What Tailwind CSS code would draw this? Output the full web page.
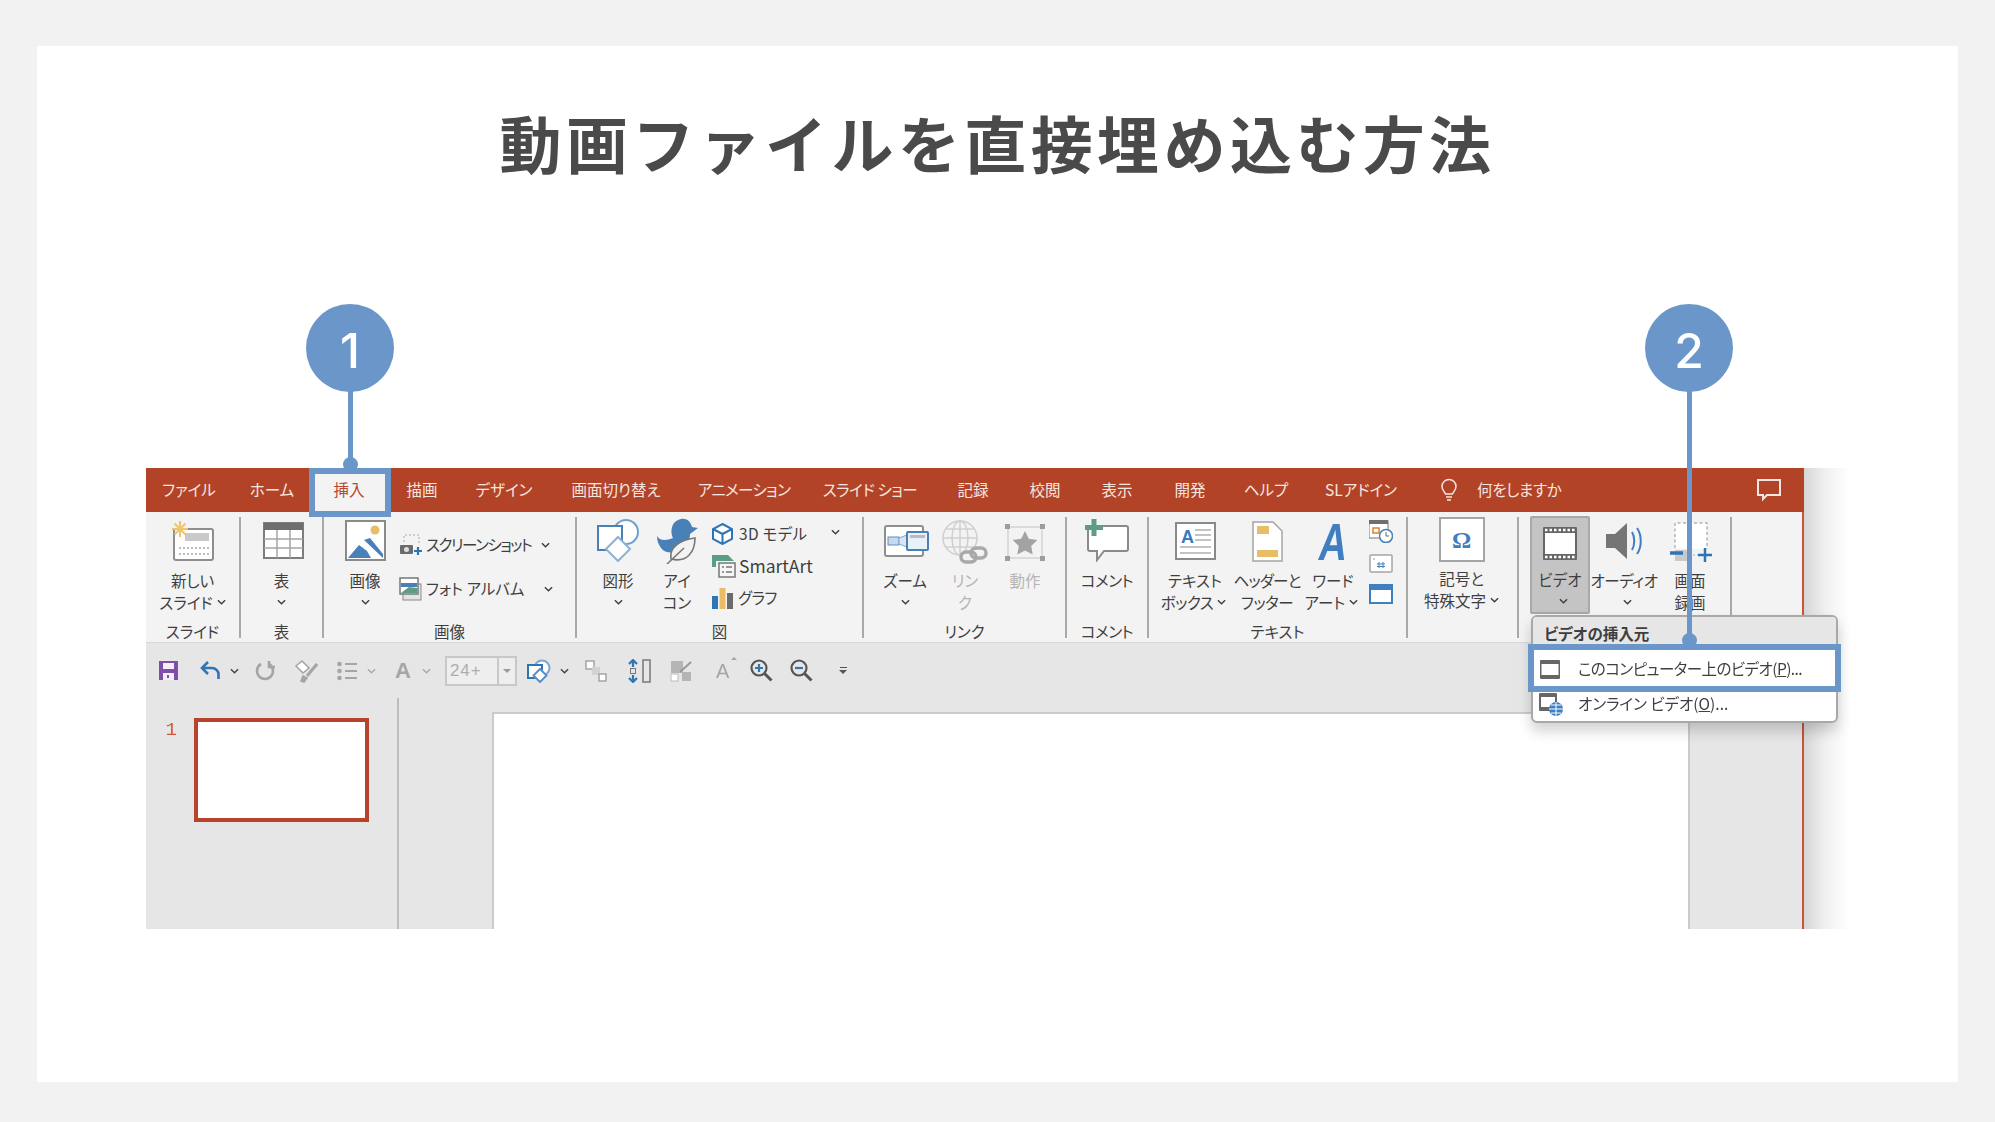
<!DOCTYPE html>
<html lang="ja">
<head>
<meta charset="UTF-8" />
<title>動画ファイルを直接埋め込む方法</title>
<script src="https://cdn.jsdelivr.net/npm/@tailwindcss/browser@4"></script>
</head>
<body class="bg-[#f2f2f2] font-['Noto_Sans_CJK_JP',sans-serif] overflow-hidden">
<svg class="hidden"><defs>
  <symbol id="chev" viewBox="0 0 10 6"><path d="M1 1l4 4 4-4" fill="none" stroke="currentColor" stroke-width="1.6"/></symbol>
</defs></svg>

<div class="relative w-[1995px] h-[1122px] pt-[46px] pl-[37px]">
  <!-- カード -->
  <div class="w-[1921px] h-[1036px] bg-white">
    <h1 class="pt-[60px] h-[422px] text-center text-[62px] leading-[72px] font-bold tracking-[4.4px] text-[#4a4a4a]">動画ファイルを直接埋め込む方法</h1>

    <div class="flex ml-[109px] blur-[0.4px]">
      <!-- PowerPoint -->
      <div class="w-[1658px] h-[461px] flex flex-col text-[#3f3f3f] text-[15.5px] [font-feature-settings:'palt']">
        <!-- タブ -->
        <div class="h-[44px] bg-[#b24326] flex items-center text-[#f6e6e0] text-center">
          <div class="w-[86px]">ファイル</div>
          <div class="w-[80px]">ホーム</div>
          <div class="w-[74px] h-full flex items-center justify-center bg-[#f3f3f3] text-[#b7472a]">挿入</div>
          <div class="w-[72px]">描画</div>
          <div class="w-[92px]">デザイン</div>
          <div class="w-[132px]">画面切り替え</div>
          <div class="w-[124px] tracking-[-0.6px]">アニメーション</div>
          <div class="w-[128px] tracking-[-0.4px]">スライド ショー</div>
          <div class="w-[78px]">記録</div>
          <div class="w-[66px]">校閲</div>
          <div class="w-[78px]">表示</div>
          <div class="w-[68px]">開発</div>
          <div class="w-[84px]">ヘルプ</div>
          <div class="w-[106px]">SLアドイン</div>
          <svg class="ml-[26px] w-[18px] h-[24px]" viewBox="0 0 18 24" fill="none" stroke="#f6e6e0" stroke-width="1.5"><path d="M5.5 16C4 13 2 11.500 2 8.500a7 7 0 0114 0c0 3-2 4.500-3.500 7.500z"/><path d="M6 19h6M7 22h4"/></svg>
          <div class="ml-[19px] tracking-[-0.3px]">何をしますか</div>
          <svg class="ml-[195px] w-[26px] h-[24px]" viewBox="0 0 26 24" fill="none" stroke="#f6e6e0" stroke-width="2"><path d="M2 2h22v15H11l-4 4v-4H2z"/></svg>
        </div>

        <div class="flex-1 flex flex-col border-r-2 border-[#c8553a]">
          <!-- リボン -->
          <div class="h-[131px] bg-[#f3f3f3] flex border-b border-[#d9d9d9]">
            <!-- スライド -->
            <div class="w-[93px] flex flex-col">
              <div class="h-[110px] flex flex-col items-center">
                <div class="h-[57px] flex items-center">
                  <svg class="w-[44px] h-[42px]" viewBox="0 0 44 42"><rect x="3" y="9" width="39" height="31" rx="2" fill="#fff" stroke="#8e8e8e" stroke-width="2"/><rect x="14" y="13" width="24" height="8" fill="#c9c9c9"/><path d="M8 28h30M8 34h30" stroke="#a8a8a8" stroke-dasharray="2 2" stroke-width="1.500"/><path d="M9 1v16M1 9h16M3.500 3.500l11 11M14.500 3.500l-11 11" stroke="#efc46c" stroke-width="2"/></svg>
                </div>
                <div class="leading-[22px]">新しい</div>
                <div class="leading-[22px] flex items-center gap-[4px]">スライド<svg class="w-[9px] h-[6px]"><use href="#chev"/></svg></div>
              </div>
              <div class="text-center leading-[21px]">スライド</div>
            </div>
            <div class="w-[2px] h-[121px] mt-[5px] bg-[#a9a9a9]"></div>

            <!-- 表 -->
            <div class="w-[81px] flex flex-col">
              <div class="h-[110px] flex flex-col items-center">
                <div class="h-[57px] flex items-center pl-[3px]">
                  <svg class="w-[41px] h-[37px]" viewBox="0 0 41 37"><rect x="1" y="1" width="39" height="35" fill="#fff" stroke="#7d7d7d" stroke-width="2"/><rect x="1" y="1" width="39" height="7" fill="#6e6e6e"/><path d="M14 8v28M27 8v28M1 17h39M1 26h39" stroke="#a5a5a5" stroke-width="1.500"/></svg>
                </div>
                <div class="leading-[22px]">表</div>
                <div class="h-[22px] flex items-center"><svg class="w-[9px] h-[6px]"><use href="#chev"/></svg></div>
              </div>
              <div class="text-center leading-[21px]">表</div>
            </div>
            <div class="w-[2px] h-[121px] mt-[5px] bg-[#a9a9a9]"></div>

            <!-- 画像 -->
            <div class="w-[251px] flex flex-col">
              <div class="h-[110px] flex pl-[11px]">
                <div class="w-[60px] flex flex-col items-center">
                  <div class="h-[57px] flex items-center">
                    <svg class="w-[41px] h-[41px]" viewBox="0 0 41 41"><rect x="1" y="1" width="39" height="39" fill="#fff" stroke="#8a8a8a" stroke-width="2"/><circle cx="30" cy="10" r="4.500" fill="#e9bc68"/><path d="M3 38l11-13 8 6 4 7z" fill="#4a7fb8"/><path d="M19 20l6-2 13 16v4z" fill="#4a7fb8"/></svg>
                  </div>
                  <div class="leading-[22px]">画像</div>
                  <div class="h-[22px] flex items-center"><svg class="w-[9px] h-[6px]"><use href="#chev"/></svg></div>
                </div>
                <div class="ml-[4px] pt-[21px] flex flex-col gap-[20px] w-[152px]">
                  <div class="h-[24px] flex items-center whitespace-nowrap">
                    <svg class="w-[24px] h-[22px] mr-[3px] shrink-0" viewBox="0 0 24 22"><path d="M5 8V1h15v10" fill="none" stroke="#a8a8a8" stroke-dasharray="2 2"/><rect x="1" y="11" width="13" height="9" rx="1" fill="#6b6b6b"/><circle cx="7.500" cy="15.500" r="2.500" fill="#ddd"/><path d="M19 13v8M15 17h8" stroke="#2e75b6" stroke-width="2.200"/></svg>
                    <span class="tracking-[-1.5px]">スクリーンショット</span>
                    <svg class="ml-[10px] w-[9px] h-[6px] shrink-0"><use href="#chev"/></svg>
                  </div>
                  <div class="h-[24px] flex items-center whitespace-nowrap">
                    <svg class="w-[23px] h-[24px] mr-[4px] shrink-0" viewBox="0 0 23 24"><rect x="4" y="7" width="18" height="16" fill="#e4e4e4" stroke="#8a8a8a"/><rect x="1" y="1" width="18" height="16" fill="#fff" stroke="#777" stroke-width="1.500"/><path d="M2 6h16v4H2z" fill="#4a7fb8"/><path d="M2 16l8-6 8 1v5z" fill="#5f9d83"/></svg>
                    <span>フォト アルバム</span>
                    <svg class="ml-[20px] w-[9px] h-[6px] shrink-0"><use href="#chev"/></svg>
                  </div>
                </div>
              </div>
              <div class="text-center leading-[21px]">画像</div>
            </div>
            <div class="w-[2px] h-[121px] mt-[5px] bg-[#a9a9a9]"></div>

            <!-- 図 -->
            <div class="w-[285px] flex flex-col">
              <div class="h-[110px] flex pl-[11px]">
                <div class="w-[60px] flex flex-col items-center">
                  <div class="h-[57px] flex items-center">
                    <svg class="w-[42px] h-[43px]" viewBox="0 0 42 43" fill="none" stroke="#6f9fd0" stroke-width="2"><circle cx="29" cy="13" r="12" fill="#fff"/><rect x="1" y="7" width="24" height="24" fill="#fff" stroke="#4a80b8"/><path d="M21 18l12 12-12 12-12-12z" fill="#fff" stroke="#8db0d6"/></svg>
                  </div>
                  <div class="leading-[22px]">図形</div>
                  <div class="h-[22px] flex items-center"><svg class="w-[9px] h-[6px]"><use href="#chev"/></svg></div>
                </div>
                <div class="ml-[4px] w-[50px] flex flex-col items-center">
                  <div class="h-[57px] flex items-center">
                    <svg class="w-[41px] h-[46px]" viewBox="0 0 41 46"><path d="M0 18C4 24 10 22 16 20 13 14 14 3 24 1 31 0 34 5 35 9L41 10 33 16C33 22 30 26 26 30 20 36 8 36 4 30 1 26 0 22 0 18Z" fill="#4a80b8"/><path d="M14 41C12 30 22 22 38 20 38 34 30 45 14 41Z" fill="#f3f3f3" stroke="#777" stroke-width="1.600"/><path d="M10 46L27 30" stroke="#777" stroke-width="1.600"/></svg>
                  </div>
                  <div class="leading-[22px]">アイ</div>
                  <div class="leading-[22px]">コン</div>
                </div>
                <div class="ml-[10px] pt-[7px] flex flex-col gap-[2px] w-[128px]">
                  <div class="h-[30px] flex items-center">
                    <svg class="w-[21px] h-[22px] mr-[6px]" viewBox="0 0 21 22" fill="#fff" stroke="#2e75b6" stroke-width="2"><path d="M10.500 1L20 6v10l-9.500 5L1 16V6z"/><path d="M1 6l9.500 5L20 6M10.500 11v10" fill="none"/></svg>
                    <span class="whitespace-nowrap tracking-[0.3px]">3D モデル</span>
                    <svg class="ml-auto -mt-[4px] w-[9px] h-[6px]"><use href="#chev"/></svg>
                  </div>
                  <div class="h-[30px] flex items-center">
                    <svg class="w-[24px] h-[24px] mr-[3px]" viewBox="0 0 24 24"><path d="M0 1h16l6 6H4v6H0z" fill="#5c9e84"/><rect x="7" y="9" width="16" height="14" fill="#f6f6f6" stroke="#777" stroke-width="1.500"/><path d="M10 13h2M10 18h2M14 13h6M14 18h6" stroke="#777" stroke-width="1.300"/></svg>
                    <span class="text-[17.5px]">SmartArt</span>
                  </div>
                  <div class="h-[30px] flex items-center">
                    <svg class="w-[21px] h-[21px] mr-[5px]" viewBox="0 0 21 21"><rect x="0" y="8" width="6" height="13" fill="#2e75b6"/><rect x="7.500" y="0" width="6" height="21" fill="#e9bc68"/><rect x="15" y="5" width="6" height="16" fill="#6b6b6b"/></svg>
                    <span class="tracking-[-0.5px]">グラフ</span>
                  </div>
                </div>
              </div>
              <div class="text-center leading-[21px]">図</div>
            </div>
            <div class="w-[2px] h-[121px] mt-[5px] bg-[#a9a9a9]"></div>

            <!-- リンク -->
            <div class="w-[201px] flex flex-col">
              <div class="h-[110px] flex pl-[11px]">
                <div class="w-[60px] flex flex-col items-center">
                  <div class="h-[57px] flex items-center pl-[2px]">
                    <svg class="w-[45px] h-[32px]" viewBox="0 0 45 32"><rect x="1" y="1" width="38" height="30" rx="2" fill="#fff" stroke="#8e8e8e" stroke-width="2"/><rect x="4" y="12" width="11" height="8" fill="#c7d9ec" stroke="#5b8fc4"/><path d="M15 13l8-3v12l-8-3z" fill="#dbe6f2" stroke="#7ea6cf"/><rect x="23" y="7" width="21" height="18" rx="1" fill="#e8f0f8" stroke="#4a80b8" stroke-width="2"/><rect x="26" y="10" width="15" height="3" fill="#bcbcbc"/></svg>
                  </div>
                  <div class="leading-[22px]">ズーム</div>
                  <div class="h-[22px] flex items-center"><svg class="w-[9px] h-[6px]"><use href="#chev"/></svg></div>
                </div>
                <div class="ml-[5px] w-[50px] flex flex-col items-center text-[#b5b5b5]">
                  <div class="h-[57px] flex items-center pt-[4px]">
                    <svg class="w-[46px] h-[45px]" viewBox="0 0 46 45" fill="none" stroke="#cfcfcf" stroke-width="1.500"><circle cx="18" cy="18" r="17"/><ellipse cx="18" cy="18" rx="8" ry="17"/><path d="M18 1v34M1 18h34M3 9h30M3 27h30"/><g stroke="#a9a9a9" stroke-width="3.500"><rect x="19" y="32" width="15" height="10" rx="5" fill="#f3f3f3"/><rect x="29" y="28" width="15" height="10" rx="5"/></g></svg>
                  </div>
                  <div class="leading-[22px]">リン</div>
                  <div class="leading-[22px]">ク</div>
                </div>
                <div class="ml-[10px] w-[50px] flex flex-col items-center text-[#b5b5b5]">
                  <div class="h-[57px] flex items-center pt-[3px]">
                    <svg class="w-[40px] h-[37px]" viewBox="0 0 40 37"><rect x="3" y="3" width="34" height="31" fill="none" stroke="#c4c4c4"/><g fill="#9d9d9d"><rect x="0" y="0" width="5" height="5"/><rect x="35" y="0" width="5" height="5"/><rect x="0" y="32" width="5" height="5"/><rect x="35" y="32" width="5" height="5"/></g><path d="M20 7l3.800 7.800 8.600 1.200-6.200 6 1.500 8.500-7.700-4-7.700 4 1.500-8.500-6.200-6 8.600-1.200z" fill="#a3a3a3"/></svg>
                  </div>
                  <div class="leading-[22px]">動作</div>
                </div>
              </div>
              <div class="text-center leading-[21px]">リンク</div>
            </div>
            <div class="w-[2px] h-[121px] mt-[5px] bg-[#a9a9a9]"></div>

            <!-- コメント -->
            <div class="w-[80px] flex flex-col">
              <div class="h-[110px] flex flex-col items-center">
                <div class="h-[57px] flex items-center">
                  <svg class="w-[44px] h-[43px]" viewBox="0 0 44 43"><path d="M5 7h36a2 2 0 012 2v21a2 2 0 01-2 2H19l-7 9v-9H5a2 2 0 01-2-2V9a2 2 0 012-2z" fill="#fff" stroke="#8a8a8a" stroke-width="2"/><path d="M9 0v17M0 8.500h18" stroke="#5c9e84" stroke-width="5"/></svg>
                </div>
                <div class="leading-[22px] tracking-[-0.4px]">コメント</div>
              </div>
              <div class="text-center leading-[21px] tracking-[-0.4px]">コメント</div>
            </div>
            <div class="w-[2px] h-[121px] mt-[5px] bg-[#a9a9a9]"></div>

            <!-- テキスト -->
            <div class="w-[257px] flex flex-col">
              <div class="h-[110px] flex pl-[8px]">
                <div class="w-[76px] flex flex-col items-center">
                  <div class="h-[57px] flex items-center">
                    <svg class="w-[41px] h-[38px]" viewBox="0 0 41 38"><rect x="1" y="1" width="39" height="36" fill="#fff" stroke="#8a8a8a" stroke-width="2"/><text x="6" y="21" font-size="18" font-weight="700" fill="#3b7abb" font-family="Liberation Sans">A</text><path d="M20 8h16M20 13h16M20 18h16M5 25h31M5 31h31" stroke="#b0b0b0" stroke-width="1.500"/></svg>
                  </div>
                  <div class="leading-[22px]">テキスト</div>
                  <div class="leading-[22px] flex items-center gap-[4px] -ml-[3px] tracking-[-0.5px]">ボックス<svg class="w-[9px] h-[6px]"><use href="#chev"/></svg></div>
                </div>
                <div class="w-[68px] flex flex-col items-center">
                  <div class="h-[57px] flex items-center pt-[2px]">
                    <svg class="w-[31px] h-[41px]" viewBox="0 0 31 41"><path d="M1 1h20l9 9v30H1z" fill="#fff" stroke="#a5a5a5" stroke-width="1.500"/><rect x="5" y="5" width="12" height="8" fill="#e9bc68"/><rect x="5" y="29" width="21" height="7" fill="#e9bc68"/></svg>
                  </div>
                  <div class="leading-[22px] whitespace-nowrap tracking-[-0.8px]">ヘッダーと</div>
                  <div class="leading-[22px] whitespace-nowrap tracking-[-0.4px]">フッター</div>
                </div>
                <div class="w-[64px] flex flex-col items-center">
                  <div class="h-[57px] pt-[2px] flex items-center text-[52px] leading-none italic font-bold text-[#3f7ec0] font-['Liberation_Sans'] scale-x-75">A</div>
                  <div class="leading-[22px]">ワード</div>
                  <div class="leading-[22px] flex items-center gap-[4px] -ml-[3px] whitespace-nowrap">アート<svg class="w-[9px] h-[6px]"><use href="#chev"/></svg></div>
                </div>
                <div class="ml-[4px] pt-[8px] flex flex-col gap-[11px]">
                  <svg class="w-[24px] h-[23px]" viewBox="0 0 24 23"><rect x="0" y="1" width="19" height="17" fill="#fff" stroke="#777"/><rect x="0" y="0" width="19" height="4" fill="#6e6e6e"/><rect x="4" y="8" width="6" height="5" fill="none" stroke="#d9822b" stroke-width="1.500"/><circle cx="17" cy="16" r="6.500" fill="#fff" stroke="#4a80b8" stroke-width="1.500"/><path d="M17 12v4h3" fill="none" stroke="#666"/></svg>
                  <svg class="w-[24px] h-[19px]" viewBox="0 0 24 19"><rect x="1" y="1" width="22" height="17" rx="1" fill="#fff" stroke="#a5a5a5" stroke-width="1.500"/><path d="M10 8v6M14 8v6M8 10h8M8 12.500h8" stroke="#4a80b8"/><path d="M4 5h2" stroke="#999"/></svg>
                  <svg class="w-[24px] h-[20px]" viewBox="0 0 24 20"><rect x="1" y="1" width="22" height="18" fill="#fff" stroke="#3f7ec0" stroke-width="2"/><rect x="1" y="1" width="22" height="5" fill="#3f7ec0"/></svg>
                </div>
              </div>
              <div class="text-center leading-[21px]">テキスト</div>
            </div>
            <div class="w-[2px] h-[121px] mt-[5px] bg-[#a9a9a9]"></div>

            <!-- 記号 -->
            <div class="w-[109px] flex flex-col items-center pr-[2px]">
              <div class="mt-[5px] w-[46px] h-[45px] bg-white border-2 border-[#a5a5a5] flex items-center justify-center text-[24px] font-bold text-[#3f7ec0] font-['Liberation_Serif']">Ω</div>
              <div class="mt-[5px] leading-[22px]">記号と</div>
              <div class="leading-[22px] flex items-center gap-[4px] whitespace-nowrap">特殊文字<svg class="w-[9px] h-[6px]"><use href="#chev"/></svg></div>
            </div>
            <div class="w-[2px] h-[121px] mt-[5px] bg-[#a9a9a9]"></div>

            <!-- メディア -->
            <div class="w-[211px] flex pl-[11px]">
              <div class="w-[60px] h-[98px] mt-[4px] flex flex-col items-center bg-[#c4c4c4] border-2 border-[#a8a8a8] rounded-[2px]">
                <div class="h-[51px] flex items-center">
                  <svg class="w-[34px] h-[33px]" viewBox="0 0 34 33"><rect x="0" y="0" width="34" height="33" rx="1" fill="#666"/><rect x="2" y="6" width="30" height="21" fill="#fff"/><path d="M2 3h30M2 30h30" stroke="#fff" stroke-width="2.500" stroke-dasharray="2.500 2"/></svg>
                </div>
                <div class="leading-[22px]">ビデオ</div>
                <div class="h-[22px] flex items-center pl-[6px]"><svg class="w-[9px] h-[6px]"><use href="#chev"/></svg></div>
              </div>
              <div class="w-[68px] flex flex-col items-center">
                <div class="h-[57px] flex items-center pl-[2px]">
                  <svg class="w-[39px] h-[38px]" viewBox="0 0 39 38" fill="none"><path d="M0 12h9L21 1v36L9 26H0z" fill="#757575"/><path d="M26 10c3 5 3 13 0 18M31 6c5 7 5 19 0 26" stroke="#3f7ec0" stroke-width="2"/></svg>
                </div>
                <div class="leading-[22px] whitespace-nowrap tracking-[-0.4px]">オーディオ</div>
                <div class="h-[22px] flex items-center pl-[6px]"><svg class="w-[9px] h-[6px]"><use href="#chev"/></svg></div>
              </div>
              <div class="w-[64px] flex flex-col items-center">
                <div class="h-[57px] flex items-center pl-[2px] pt-[3px]">
                  <svg class="w-[43px] h-[41px]" viewBox="0 0 43 41" fill="none"><path d="M5 26V1h32v26" stroke="#b5b5b5" stroke-width="1.500" stroke-dasharray="3 2.500" fill="#fff"/><rect x="5" y="28" width="14" height="11" fill="#c9c9c9"/><path d="M0 31h13" stroke="#2e75b6" stroke-width="3.500"/><path d="M35 26v14M28 33h14" stroke="#2e75b6" stroke-width="2.500"/><path d="M19 33h9" stroke="#b5b5b5" stroke-dasharray="2 2"/></svg>
                </div>
                <div class="leading-[22px]">画面</div>
                <div class="leading-[22px]">録画</div>
              </div>
            </div>
            <div class="w-[2px] h-[121px] mt-[5px] bg-[#a9a9a9]"></div>
          </div>

          <div class="flex-1 bg-[#e6e6e6] flex flex-col">
            <!-- クイックアクセス -->
            <div class="h-[55px] flex items-center pl-[12px] text-[#444]">
              <svg class="w-[21px] h-[21px]" viewBox="0 0 21 21"><path d="M1 1h19v19H1z" fill="#7f4fa8"/><rect x="5" y="3" width="11" height="6" fill="#f3eef8"/><rect x="5" y="13" width="11" height="7" fill="#f3eef8"/><rect x="9" y="15" width="2" height="3" fill="#7f4fa8"/></svg>
              <svg class="ml-[21px] w-[21px] h-[21px]" viewBox="0 0 21 21" fill="none" stroke="#2e75b6" stroke-width="2.600"><path d="M8 2L2 8l6 6"/><path d="M2 8h10a6.500 6.500 0 016.500 6.500V19"/></svg>
              <svg class="ml-[9px] w-[9px] h-[6px]"><use href="#chev"/></svg>
              <svg class="ml-[15px] w-[21px] h-[21px]" viewBox="0 0 21 21" fill="none" stroke="#a5a5a5" stroke-width="2.600"><path d="M7 4a8 8 0 108 0"/><path d="M15 1v6h6"/></svg>
              <svg class="ml-[19px] w-[24px] h-[24px]" viewBox="0 0 24 24" fill="none" stroke="#a5a5a5" stroke-width="1.600"><path d="M2 7l6-5 7 7-6 5z" fill="#fff"/><path d="M23 5L13 17"  stroke-width="3"/><path d="M9 17l4 2-3 4-3-1z" fill="#a5a5a5"/></svg>
              <svg class="ml-[19px] w-[20px] h-[20px]" viewBox="0 0 20 20" fill="#a5a5a5"><circle cx="2.500" cy="3" r="2.300"/><circle cx="2.500" cy="10" r="2.300"/><circle cx="2.500" cy="17" r="2.300"/><path d="M8 2h12v2H8zM8 9h12v2H8zM8 16h12v2H8z"/></svg>
              <svg class="ml-[10px] w-[9px] h-[6px] text-[#aaa]"><use href="#chev"/></svg>
              <span class="ml-[19px] text-[22px] font-bold text-[#a5a5a5] font-['Liberation_Sans']">A</span>
              <svg class="ml-[11px] w-[9px] h-[6px] text-[#aaa]"><use href="#chev"/></svg>
              <div class="ml-[14px] w-[72px] h-[30px] flex border-2 border-[#c8c8c8] bg-[#eeeeee]">
                <div class="w-[52px] pl-[3px] border-r-2 border-[#c8c8c8] text-[17px] leading-[26px] text-[#adadad] font-['Liberation_Sans'] tracking-[1px]">24+</div>
                <div class="flex-1 flex items-center justify-center"><div class="border-x-[4px] border-t-[4px] border-x-transparent border-t-[#9a9a9a]"></div></div>
              </div>
              <svg class="ml-[10px] w-[24px] h-[24px]" viewBox="0 0 24 24" fill="none" stroke-width="2"><circle cx="15" cy="9" r="7.500" fill="#fff" stroke="#7ea6cf"/><rect x="1" y="6" width="14" height="13" fill="#fff" stroke="#2e75b6"/><path d="M13 10l6.500 6.500L13 23l-6.500-6.500z" fill="#fff" stroke="#5b8fc4"/></svg>
              <svg class="ml-[9px] w-[9px] h-[6px]"><use href="#chev"/></svg>
              <svg class="ml-[16px] w-[22px] h-[22px]" viewBox="0 0 22 22"><rect x="1" y="1" width="8" height="8" fill="#fff" stroke="#a5a5a5" stroke-width="1.500"/><rect x="7" y="7" width="8" height="8" fill="#d4d0d4"/><rect x="14" y="14" width="7" height="7" fill="#fff" stroke="#a5a5a5" stroke-width="1.500"/></svg>
              <svg class="ml-[20px] w-[24px] h-[24px]" viewBox="0 0 24 24" fill="none"><rect x="16" y="1" width="7" height="22" stroke="#777" stroke-width="1.500"/><path d="M6 1v7M2 5l4-4 4 4M6 23v-7M2 19l4 4 4-4" stroke="#2e75b6" stroke-width="2.200"/><rect x="3.500" y="9.500" width="5" height="5" stroke="#777"/></svg>
              <svg class="ml-[19px] w-[22px] h-[22px]" viewBox="0 0 22 22"><rect x="1" y="1" width="12" height="12" fill="#b5b5b5"/><rect x="12" y="12" width="9" height="9" fill="#b5b5b5"/><rect x="1" y="14" width="7" height="7" fill="#fff" stroke="#bbb"/><path d="M10 12L21 2" stroke="#999" stroke-width="2"/></svg>
              <span class="ml-[24px] text-[20px] text-[#a5a5a5] font-['Liberation_Sans'] relative">A<span class="absolute -right-[8px] top-[1px] border-x-[3px] border-b-[3px] border-x-transparent border-b-[#a5a5a5]"></span></span>
              <svg class="ml-[21px] w-[23px] h-[23px]" viewBox="0 0 23 23" fill="none" stroke="#555" stroke-width="2.200"><circle cx="9" cy="9" r="7.500"/><path d="M14.500 14.500l7 7" stroke-width="3"/><path d="M5 9h8M9 5v8" stroke="#2e75b6"/></svg>
              <svg class="ml-[17px] w-[23px] h-[23px]" viewBox="0 0 23 23" fill="none" stroke="#555" stroke-width="2.200"><circle cx="9" cy="9" r="7.500"/><path d="M14.500 14.500l7 7" stroke-width="3"/><path d="M5 9h8" stroke="#2e75b6"/></svg>
              <div class="ml-[26px] flex flex-col items-center gap-[2px]">
                <div class="w-[7px] h-[1.500px] bg-[#555]"></div>
                <div class="border-x-[4px] border-t-[4px] border-x-transparent border-t-[#555]"></div>
              </div>
            </div>

            <!-- 編集領域 -->
            <div class="flex-1 flex">
              <div class="w-[253px] border-r-2 border-[#bdbdbd] flex">
                <div class="w-[48px] text-right pr-[17px] pt-[19px] text-[19px] leading-[26px] text-[#d4553a] font-['Liberation_Mono']">1</div>
                <div class="mt-[20px] w-[175px] h-[104px] bg-white border-[4px] border-[#b7432a]"></div>
              </div>
              <div class="w-[93px]"></div>
              <div class="mt-[14px] w-[1198px] bg-white border-t-2 border-x-2 border-[#cbcbcb]"></div>
            </div>
          </div>
        </div>
      </div>
      <!-- 影 -->
      <div class="w-[46px] h-[461px] bg-linear-to-r from-[#d6d6d6] via-[#f2f2f2] to-white"></div>
    </div>
  </div>

  <!-- メニュー -->
  <div class="absolute left-[1531px] top-[615px] w-[307px] h-[108px] flex flex-col bg-white border-2 border-[#a8a8a8] rounded-[6px] overflow-hidden shadow-[0_8px_14px_rgba(0,0,0,0.18)] text-[#3f3f3f] text-[15.500px] [font-feature-settings:'palt'] blur-[0.4px]">
    <div class="h-[29px] bg-[#e6e6e6] pl-[11px] font-bold leading-[32px]">ビデオの挿入元</div>
    <div class="h-[48px] flex items-center -mt-[1px]">
      <svg class="ml-[7px] w-[20px] h-[19px]" viewBox="0 0 20 19"><rect width="20" height="19" rx="1" fill="#666"/><rect x="1.500" y="4" width="17" height="11" fill="#fff"/></svg>
      <span class="ml-[18px] whitespace-nowrap tracking-[-0.55px]">このコンピューター上のビデオ(<span class="underline">P</span>)...</span>
    </div>
    <div class="flex-1 flex items-center -mt-[6px]">
      <svg class="ml-[5px] w-[25px] h-[23px]" viewBox="0 0 25 23"><rect x="1" y="0" width="18" height="18" rx="1" fill="#666"/><rect x="3" y="4" width="14" height="10" fill="#fff"/><circle cx="18" cy="16" r="7" fill="#3f7ec0"/><path d="M11 16h14M18 9v14M13 12h10M13 20h10" stroke="#fff"/></svg>
      <span class="ml-[15px] whitespace-nowrap">オンライン ビデオ(<span class="underline">O</span>)...</span>
    </div>
  </div>

  <!-- 注釈 -->
  <div class="absolute left-[309px] top-[468px] w-[82px] h-[49px] border-[6px] border-[#6b96ca]"></div>
  <div class="absolute left-[1528px] top-[644px] w-[313px] h-[48px] border-[6px] border-[#6b96ca]"></div>

  <div class="absolute left-[348px] top-[380px] w-[5px] h-[85px] bg-[#6b96ca]"></div>
  <div class="absolute left-[343px] top-[457px] w-[15px] h-[15px] rounded-full bg-[#6b96ca]"></div>
  <div class="absolute left-[306px] top-[304px] w-[88px] h-[88px] pt-[5px] rounded-full bg-[#6b96ca] flex items-center justify-center text-white text-[48px] font-medium font-['Inter']">1</div>

  <div class="absolute left-[1687px] top-[380px] w-[5px] h-[260px] bg-[#6b96ca]"></div>
  <div class="absolute left-[1682px] top-[633px] w-[15px] h-[15px] rounded-full bg-[#6b96ca]"></div>
  <div class="absolute left-[1645px] top-[304px] w-[88px] h-[88px] pt-[5px] rounded-full bg-[#6b96ca] flex items-center justify-center text-white text-[48px] font-medium font-['Inter']">2</div>
</div>
</body>
</html>
